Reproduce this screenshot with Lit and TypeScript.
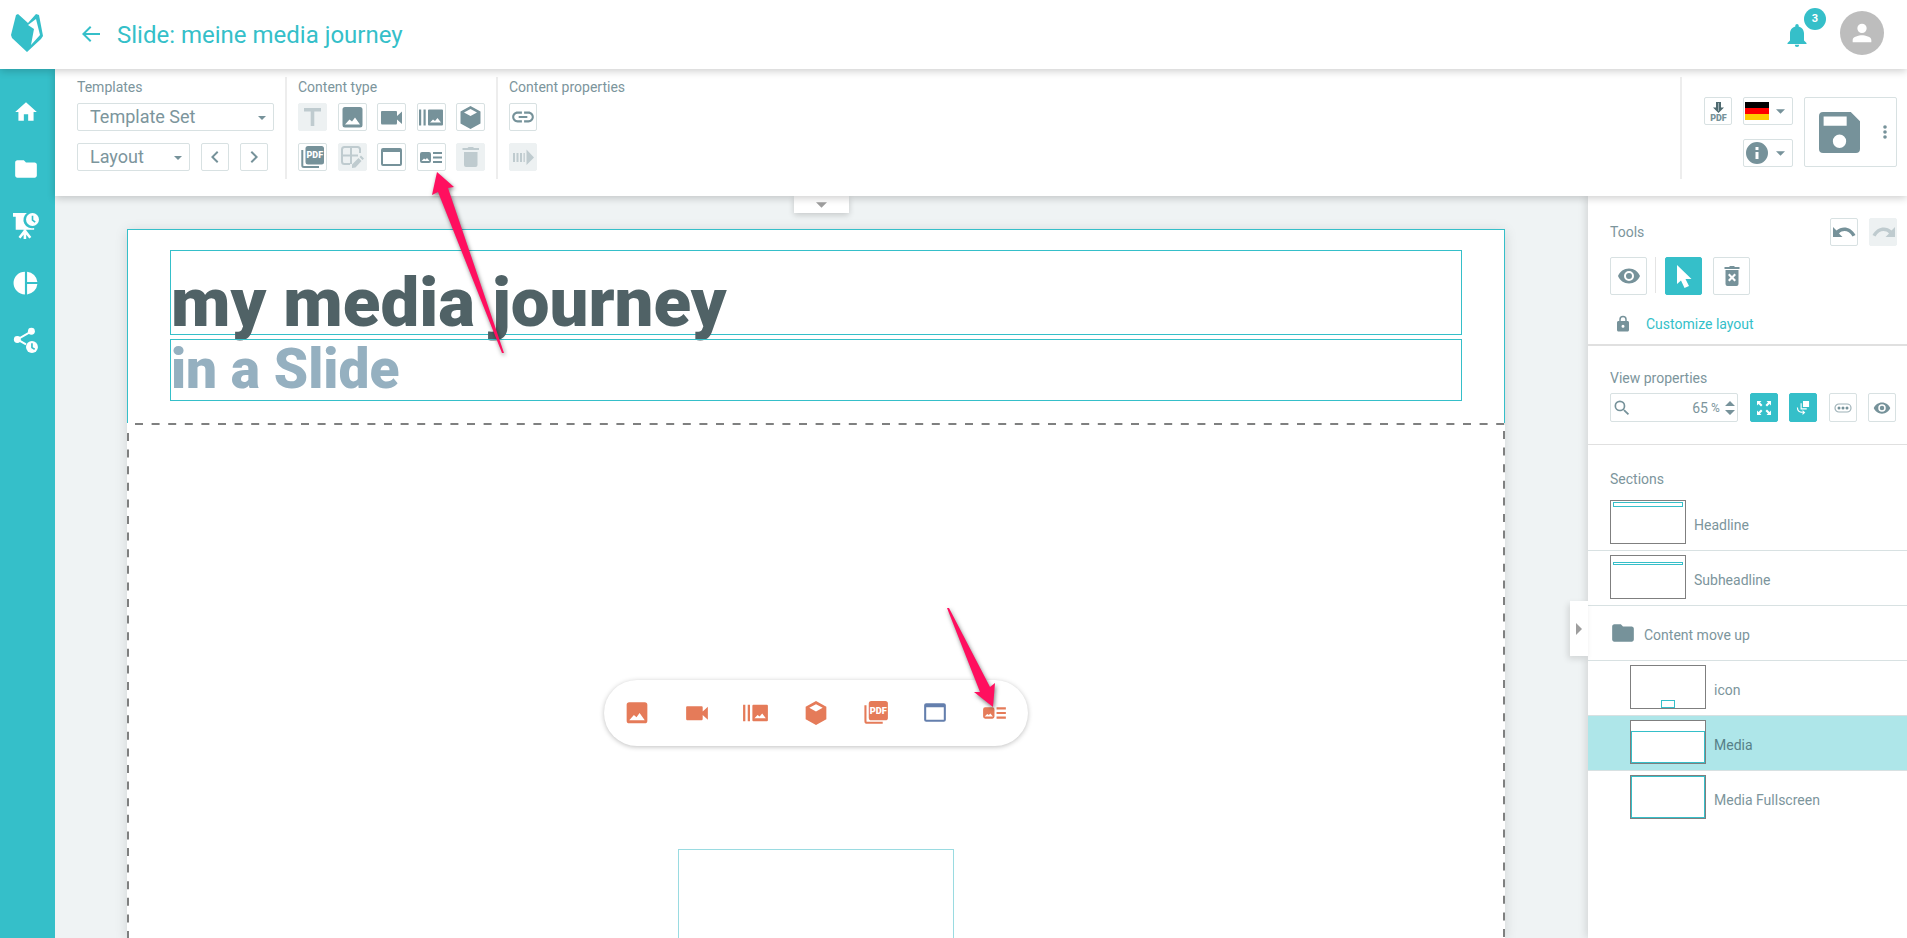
import { LitElement, html, css, svg, nothing } from "lit";
import { customElement, property } from "lit/decorators.js";

// Each glyph: [viewBox, drawing]. The 29-unit ones fill a toolbar button edge to edge.
const GLYPHS: Record<string, [string, unknown]> = {
  logo: ["0 0 32 38", svg`<path d="M7 0L17 9L25 0L28 1L32 22L30 25L16 38L1 24L0 21L5 1Z"/><path fill="#fff" d="M25 5L29 21L20 31L23 15L17 11Z"/>`],
  back: ["0 0 24 24", svg`<path d="M21 11H6.83l5.59-5.59L11 4l-8 8 8 8 1.41-1.41L6.83 13H21z"/>`],
  home: ["0 0 24 24", svg`<path d="M10 20v-6h4v6h5v-8h3L12 3 2 12h3v8z"/>`],
  folder: ["0 0 24 24", svg`<path d="M10 4H4c-1.1 0-2 .9-2 2v12c0 1.1.9 2 2 2h16c1.1 0 2-.9 2-2V8c0-1.1-.9-2-2-2h-8z"/>`],
  present: ["0 0 24 24", svg`<path d="M0 0H12.800A7.800 7.800 0 0 0 19.500 13.800V15.500H2.500V3.500H0z"/><path d="M11 15V24M11 16.500L6 22.800M11 16.500L16 22.800" fill="none" stroke="currentColor" stroke-width="2.400"/><circle cx="18" cy="6" r="6"/><path d="M18 2.500V6.500L20.500 8.500" fill="none" stroke="#35bfc9" stroke-width="1.500"/>`],
  pie: ["0 0 24 24", svg`<path d="M11 1.500V22.500A10.500 10.500 0 0 1 11 1.500zM13 1.500A10.500 10.500 0 0 1 22.500 11H13zM13 13H22.500A10.500 10.500 0 0 1 13 22.500z"/>`],
  share: ["0 0 24 24", svg`<path d="M17 4L4 11.500L12 16" fill="none" stroke="#fff" stroke-width="1.800"/><circle cx="17" cy="4" r="3.200"/><circle cx="4" cy="11.500" r="3.200"/><circle cx="17.500" cy="18.500" r="5.500"/><path d="M17.500 15V19L20 20.500" fill="none" stroke="#35bfc9" stroke-width="1.500"/>`],
  bell: ["0 0 24 24", svg`<path d="M12 24a2.200 2.200 0 0 0 2.200-2.200H9.800A2.200 2.200 0 0 0 12 24zM19 17.500V10.500C19 7 17 4.200 13.700 3.400V2.600a1.700 1.700 0 0 0-3.400 0V3.400C7 4.200 5 7 5 10.500V17.500L2.500 20V21H21.500V20z"/>`],
  person: ["0 0 24 24", svg`<path d="M12 12a4 4 0 1 0 0-8 4 4 0 0 0 0 8zm0 2c-2.700 0-8 1.300-8 4v2h16v-2c0-2.700-5.300-4-8-4z"/>`],
  prev: ["0 0 24 24", svg`<path d="M15.400 7.400L14 6l-6 6 6 6 1.400-1.400L10.800 12z"/>`],
  next: ["0 0 24 24", svg`<path d="M10 6L8.600 7.400 13.200 12l-4.600 4.600L10 18l6-6z"/>`],
  text: ["0 0 29 29", svg`<path d="M6 5H23V8.500H16.300V23H12.700V8.500H6z"/>`],
  image: ["0 0 29 29", svg`<path fill-rule="evenodd" d="M7 4H22A2.500 2.500 0 0 1 24.500 6.500V22A2.500 2.500 0 0 1 22 24.500H7A2.500 2.500 0 0 1 4.500 22V6.500A2.500 2.500 0 0 1 7 4zM7 21.500H22L17 14.500L14 18.500L11.500 16.500z"/>`],
  video: ["0 0 29 29", svg`<path d="M5 8H19Q20 8 20 9V13L25 8.500V21L20 16.500V20Q20 21.500 19 21.500H5Q4 21.500 4 20V9Q4 8 5 8z"/>`],
  slides: ["0 0 29 29", svg`<path fill-rule="evenodd" d="M2 6.500H4.200V22.500H2zM6.500 6.500H8.700V22.500H6.500zM12 6.500H25Q26 6.500 26 7.500V21.500Q26 22.500 25 22.500H12Q11 22.500 11 21.500V7.500Q11 6.500 12 6.500zM13 19.500H24L20.500 15L18 18L16 16.500z"/>`],
  cube: ["0 0 29 29", svg`<path fill-rule="evenodd" d="M14.500 3L24.500 8.500V20.500L14.500 26L4.500 20.500V8.500zM14.500 6L8 9.500L14.500 13L21 9.500z"/>`],
  pdf: ["0 0 29 29", svg`<path d="M4.300 7V22.500Q4.300 24 6 24H21" fill="none" stroke="currentColor" stroke-width="2"/><rect x="7.500" y="3" width="18.500" height="18.500" rx="2.500"/><text x="16.800" y="15" text-anchor="middle" fill="#fff" font-size="9" font-weight="900" font-family="Roboto, sans-serif">PDF</text>`],
  table: ["0 0 29 29", svg`<path d="M12 21H6.500Q4 21 4 18.500V6.500Q4 4 6.500 4H19.500Q22 4 22 6.500V10M4 12.500H20M13 4V21" fill="none" stroke="currentColor" stroke-width="2"/><path d="M14 25V21.500L20.500 15L23.500 18L17.500 24.500zM21.500 14L23 12.500L26 15.500L24.500 17z"/>`],
  window: ["0 0 29 29", svg`<path fill-rule="evenodd" d="M6 5H23Q25 5 25 7V21Q25 23 23 23H6Q4 23 4 21V7Q4 5 6 5zM6 9V21H23V9z"/>`],
  mediatext: ["0 0 29 29", svg`<path fill-rule="evenodd" d="M5 9H12Q14 9 14 11V18Q14 20 12 20H5Q3 20 3 18V11Q3 9 5 9zM4.500 18H12.500L10 15L8.500 16.500L7 15.500z"/><path d="M16 9H25V11H16zM16 13.500H25V15.500H16zM16 18H25V20H16z"/>`],
  trash: ["0 0 29 29", svg`<path d="M8 9H21.500V22Q21.500 24 19.500 24H10Q8 24 8 22zM6.500 5H11.500L12.500 4H17L18 5H23V7H6.500z"/>`],
  link: ["0 0 24 24", svg`<path d="M3.900 12c0-1.710 1.390-3.100 3.100-3.100h4V7H7c-2.760 0-5 2.240-5 5s2.240 5 5 5h4v-1.900H7c-1.710 0-3.100-1.390-3.100-3.100zM8 13h8v-2H8v2zm9-6h-4v1.900h4c1.710 0 3.100 1.390 3.100 3.100s-1.390 3.100-3.100 3.100h-4V17h4c2.760 0 5-2.240 5-5s-2.240-5-5-5z"/>`],
  move: ["0 0 29 29", svg`<path d="M4 10H6V19H4zM7.500 10H9.500V19H7.500zM11 10H13V19H11zM14.500 10H15.800V19H14.500zM17.500 6.500L25 14.500L17.500 22z"/>`],
  pdfdown: ["0 0 29 29", svg`<path fill="#4f6a70" d="M12 5H17V10.500H20L14.500 16L9 10.500H12z"/><path d="M14.500 6V14" stroke="#9db0b5" fill="none"/><text x="14.500" y="24" text-anchor="middle" font-size="9" font-weight="900" font-family="Roboto, sans-serif">PDF</text>`],
  flag: ["0 0 24 18", svg`<path fill="#000" d="M0 0H24V6H0z"/><path fill="#f00" d="M0 6H24V12H0z"/><path fill="#fc0" d="M0 12H24V18H0z"/>`],
  info: ["0 0 24 24", svg`<path fill-rule="evenodd" d="M12 1a11 11 0 1 0 0 22 11 11 0 0 0 0-22zM13.500 18h-3v-7h3zm0-9h-3V6h3z"/>`],
  caret: ["0 0 10 5", svg`<path d="M0 0H10L5 5z"/>`],
  save: ["0 0 40 40", svg`<path fill-rule="evenodd" d="M4 0H31L40 9V36Q40 40 36 40H4Q0 40 0 36V4Q0 0 4 0zM4.500 4.500V13.500H27V4.500zM20 22a6.500 6.500 0 1 0 0 13 6.500 6.500 0 0 0 0-13z"/>`],
  dots: ["0 0 4 14", svg`<circle cx="2" cy="2" r="1.800"/><circle cx="2" cy="7" r="1.800"/><circle cx="2" cy="12" r="1.800"/>`],
  undo: ["0 0 29 29", svg`<path d="M3 9L6.500 12.500C12 7.500 21 8.500 25.500 17L22.500 18.500C19 12.500 13 11.500 9 15.500L12.500 19H3z"/>`],
  redo: ["0 0 29 29", svg`<path d="M26 9L22.500 12.500C17 7.500 8 8.500 3.500 17L6.500 18.500C10 12.500 16 11.500 20 15.500L16.500 19H26z"/>`],
  eye: ["0 0 24 24", svg`<path d="M12 4.500C7 4.500 2.730 7.610 1 12c1.730 4.390 6 7.500 11 7.500s9.270-3.110 11-7.500c-1.730-4.390-6-7.500-11-7.500zM12 17a5 5 0 1 1 0-10 5 5 0 0 1 0 10zm0-8a3 3 0 1 0 0 6 3 3 0 0 0 0-6z"/>`],
  pointer: ["0 0 24 24", svg`<path d="M5 1V20L9 16.500L12.500 24L17 22L13.500 15H19.500z"/>`],
  trashx: ["0 0 24 24", svg`<path fill-rule="evenodd" d="M5.500 6H18.500V20Q18.500 22 16.500 22H7.500Q5.500 22 5.500 20zM4.500 3H9L10 2H14L15 3H19.500V5H4.500zM8 11L10.500 13.500L8 16L9.500 17.500L12 15L14.500 17.500L16 16L13.500 13.500L16 11L14.500 9.500L12 12L9.500 9.500z"/>`],
  lock: ["0 0 24 24", svg`<path fill-rule="evenodd" d="M18 8h-1V6A5 5 0 0 0 7 6v2H6c-1.100 0-2 .9-2 2v10c0 1.100.9 2 2 2h12c1.100 0 2-.9 2-2V10c0-1.100-.9-2-2-2zM12 17a2 2 0 1 1 0-4 2 2 0 0 1 0 4zM15 8H9V6a3 3 0 0 1 6 0z"/>`],
  search: ["0 0 24 24", svg`<path d="M15.500 14h-.79l-.28-.27A6.470 6.470 0 0 0 16 9.500 6.500 6.500 0 1 0 9.500 16c1.610 0 3.090-.59 4.230-1.570l.27.28v.79l5 4.990L20.490 19zm-6 0a4.500 4.500 0 1 1 0-9 4.500 4.500 0 0 1 0 9z"/>`],
  stepper: ["0 0 10 14", svg`<path d="M5 0L10 5H0zM0 9H10L5 14z"/>`],
  expand: ["0 0 14 14", svg`<path d="M0 0H4.500L3 1.500L5.500 4L4 5.500L1.500 3L0 4.500zM14 0V4.500L12.500 3L10 5.500L8.500 4L11 1.500L9.500 0zM0 14V9.500L1.500 11L4 8.500L5.500 10L3 12.500L4.500 14zM14 14H9.500L11 12.500L8.500 10L10 8.500L12.500 11L14 9.500z"/>`],
  rotate: ["0 0 14 15", svg`<path d="M7 0H13.500V6.500H7z"/><path d="M5 2.500V8.500H11M1 7Q1 12 6.500 12.200" fill="none" stroke="currentColor" stroke-width="1.200"/><path d="M6.500 9.600L9.500 12.300L6.500 15z"/>`],
  more: ["0 0 18 10", svg`<rect x="1" y="1" width="16" height="8" rx="4" fill="none" stroke="currentColor" stroke-width="1.200" opacity=".7"/><circle cx="5" cy="5" r="1.500"/><circle cx="9" cy="5" r="1.500"/><circle cx="13" cy="5" r="1.500"/>`],
  right: ["0 0 6 12", svg`<path d="M0 0L6 6L0 12z"/>`],
};

const ICON = (name: string) => html`<ui-icon name=${name}></ui-icon>`;

@customElement("ui-icon")
class UiIcon extends LitElement {
  @property() name = "";
  static styles = css`
    :host { display: block; flex: none; width: 24px; height: 24px; }
    svg { display: block; width: 100%; height: 100%; fill: currentColor; }
  `;
  render() {
    const g = GLYPHS[this.name];
    return g ? html`<svg viewBox=${g[0]} aria-hidden="true">${g[1]}</svg>` : nothing;
  }
}

const CONTENT_TYPES = [
  ["text", "Text", true], ["image", "Image", false], ["video", "Video", false],
  ["slides", "Slideshow", false], ["cube", "3D object", false], ["pdf", "PDF", false],
  ["table", "Table", true], ["window", "Web page", false], ["mediatext", "Media and text", false],
  ["trash", "Delete", true],
] as const;

const SECTIONS = [
  { label: "Headline", kind: "headline" },
  { label: "Subheadline", kind: "subheadline" },
  { label: "Content move up", kind: "group" },
  { label: "icon", kind: "small", nested: true },
  { label: "Media", kind: "media", nested: true, selected: true },
  { label: "Media Fullscreen", kind: "full", nested: true },
];

@customElement("app-root")
class AppRoot extends LitElement {
  static styles = css`
    :host {
      --teal: #35bfc9; --ink: #76929a; --line: #d8e1e2;
      display: flex; flex-direction: column; height: 100vh; overflow: hidden; position: relative;
      font: 14px/20px Roboto, sans-serif; color: #7c959c; background: #fff;
    }
    * { box-sizing: border-box; }
    button, select, input { font: inherit; color: inherit; margin: 0; padding: 0; background: #fff; }
    button { color: var(--ink); }
    h1, h2, p, ul { margin: 0; padding: 0; font-weight: 400; }
    ul { list-style: none; }

    header { display: flex; align-items: center; height: 69px; flex: none; z-index: 3; padding-right: 23px; background: #fff; box-shadow: 0 2px 8px rgba(0,0,0,.2); color: var(--teal); }
    .logo { width: 55px; padding-left: 11px; margin-bottom: 3px; }
    .logo ui-icon { width: 32px; height: 38px; }
    .plain { border: 0; background: none; display: grid; place-items: center; color: inherit; position: relative; }
    .back { margin: 0 14px 2px 24px; }
    header h1 { font-size: 24px; line-height: 32px; flex: 1; }
    .badge { position: absolute; left: 19px; top: -15px; width: 22px; height: 22px; border-radius: 11px; background: var(--teal); color: #fff; font-size: 11px; line-height: 22px; font-weight: 700; }
    .avatar { width: 44px; height: 44px; border-radius: 22px; background: #bdbdbd; color: #fff; margin: 0 0 3px 31px; }
    .avatar ui-icon { width: 28px; height: 28px; }

    .body { display: flex; flex: 1; min-height: 0; }
    .rail { width: 55px; flex: none; background: var(--teal); color: #fff; display: flex; flex-direction: column; align-items: center; gap: 31px; padding: 30px 4px 0 0; }
    .rail a { color: inherit; display: block; }
    .rail ui-icon { width: 26px; height: 26px; }
    .main { flex: 1; min-width: 0; display: flex; flex-direction: column; }

    .toolbar { display: flex; height: 127px; flex: none; padding: 8px 10px 17px 22px; z-index: 2; background: #fff; box-shadow: 0 2px 8px rgba(0,0,0,.2); }
    .group { padding: 0 11px; border-right: 2px solid #ededed; }
    .group:first-child { padding-left: 0; }
    .group.last { border: 0; flex: 1; }
    .group h2, .label { font-size: 14px; line-height: 16px; padding-top: 2px; }
    .group h2 { margin-bottom: 8px; }
    .row { display: flex; gap: 11px; }
    .row + .row { margin-top: 12px; }
    .btn { width: 28px; height: 28px; flex: none; border: 1px solid var(--line); border-radius: 2px; display: grid; place-items: center; place-content: center; overflow: hidden; }
    .btn ui-icon { width: 29px; height: 29px; }
    .btn ui-icon[name="link"] { width: 26px; height: 26px; }
    .btn ui-icon[name="prev"], .btn ui-icon[name="next"] { width: 24px; height: 24px; }
    .btn:disabled { background: #edf1f2; border-color: #edf1f2; color: #bfcbcf; }
    .btn.on { background: var(--teal); border-color: var(--teal); color: #fff; }
    .types { display: grid; grid-template-columns: repeat(5, 29px); justify-content: space-between; row-gap: 12px; width: 187px; }
    .types .btn { width: 29px; }
    .pick { position: relative; display: block; }
    .pick select { appearance: none; display: block; width: 100%; height: 28px; padding-left: 12px; border: 1px solid var(--line); border-radius: 2px; font-size: 18px; }
    .pick > ui-icon { position: absolute; right: 8px; top: 13px; width: 8px; height: 4px; color: var(--ink); }
    .set { width: 197px; }
    .lay { width: 113px; }
    .stack { display: grid; align-content: start; gap: 14px; padding-top: 20px; }
    .export { display: flex; gap: 11px; padding-left: 22px; border-left: 2px solid #ededed; }
    .drop { width: 50px; height: 28px; display: flex; align-items: center; gap: 7px; padding-left: 1px; border: 1px solid var(--line); border-radius: 2px; }
    .drop ui-icon[name="flag"] { height: 18px; }
    .drop ui-icon[name="caret"] { width: 9px; height: 5px; }
    .save { display: flex; align-items: center; justify-content: space-between; width: 93px; height: 70px; margin-top: 20px; padding: 0 9px 0 14px; border: 1px solid var(--line); border-radius: 2px; }
    .save ui-icon { width: 41px; height: 41px; }
    .save ui-icon[name="dots"] { width: 4px; height: 14px; }

    .work { display: flex; flex: 1; min-height: 0; position: relative; }
    .stage { flex: 1; min-width: 0; background: #eff3f4; padding: 33px 83px 0 72px; display: flex; }
    .slide { flex: 1; min-width: 0; display: flex; flex-direction: column; background: #fff; box-shadow: 0 2px 12px rgba(0,0,0,.13); }
    .titles { border: 1px solid var(--teal); border-bottom: 0; padding: 20px 42px 21px; height: 194px; display: grid; row-gap: 4px; align-content: start; }
    .titles p { border: 1px solid var(--teal); font-weight: 900; white-space: nowrap; }
    .titles .big { height: 85px; font-size: 69px; line-height: 104px; color: #506266; }
    .titles .sub { height: 62px; font-size: 55px; line-height: 58px; color: #95b0c0; }
    .media { flex: 1; position: relative; display: flex; flex-direction: column; align-items: center; padding-top: 257px; min-height: 0; }
    .dashes { position: absolute; inset: 0; width: 100%; height: 100%; }
    .dashes line { stroke: #7f8080; stroke-width: 2; stroke-dasharray: 8 8.600; }
    .pill { display: flex; justify-content: space-between; align-items: center; width: 424px; height: 66px; flex: none; border-radius: 33px; padding: 0 18px; background: #fff; box-shadow: 0 1px 5px rgba(0,0,0,.25); z-index: 1; color: #e57b59; }
    .pill ui-icon { width: 30px; height: 30px; }
    .pill ui-icon[name="window"] { color: #647fad; }
    .frame { width: 276px; flex: 1; margin-top: 103px; border: 1px solid #9adbe1; border-bottom: 0; }
    .tab { position: absolute; left: 739px; top: 0; width: 55px; height: 17px; background: #fff; color: #9e9e9e; border: 0; box-shadow: 0 2px 6px rgba(0,0,0,.18); display: grid; place-items: center; }
    .tab ui-icon { width: 11px; height: 6px; }

    aside { width: 319px; flex: none; position: relative; background: #fff; box-shadow: -2px 0 8px rgba(0,0,0,.12); }
    .handle { position: absolute; left: -18px; top: 405px; width: 18px; height: 55px; border: 0; background: #fff; color: #9e9e9e; display: grid; place-items: center; box-shadow: -2px 3px 6px rgba(0,0,0,.12); }
    .handle ui-icon { width: 6px; height: 12px; }
    .tools { padding: 22px 10px 0 22px; height: 150px; border-bottom: 2px solid #e0e0e0; }
    .toolhead { display: flex; gap: 11px; }
    .toolhead .label { flex: 1; padding-top: 6px; }
    .modes { display: flex; gap: 11px; margin-top: 11px; }
    .modes .btn { width: 37px; height: 38px; }
    .modes ui-icon { width: 24px; height: 24px; }
    .sep { width: 1px; margin: 0 -2px 2px -3px; background: #e4e4e4; }
    .custom { display: flex; align-items: center; gap: 14px; margin: 19px 0 0 4px; color: var(--teal); }
    .custom ui-icon { width: 18px; height: 18px; color: var(--ink); }
    .custom a { color: inherit; text-decoration: none; }
    .view { padding: 22px 11px 0 22px; height: 99px; border-bottom: 1px solid #e0e0e0; }
    .view .label { margin-bottom: 7px; display: block; }
    .zoomrow { display: flex; justify-content: space-between; }
    .zoom { display: flex; align-items: center; width: 128px; height: 29px; border: 1px solid var(--line); border-radius: 2px; padding: 0 4px 0 1px; }
    .zoom ui-icon { width: 20px; height: 20px; color: var(--ink); }
    .zoom input { appearance: textfield; border: 0; width: 76px; text-align: right; outline: 0; }
    .zoom input::-webkit-inner-spin-button { display: none; }
    .zoom span { font-size: 12px; padding: 0 5px 0 3px; }
    .zoom ui-icon[name="stepper"] { width: 10px; height: 14px; }
    .zoomrow .btn { height: 29px; }
    .zoomrow .btn ui-icon { width: 14px; height: 14px; }
    .zoomrow .btn ui-icon[name="more"] { width: 18px; }
    .zoomrow .btn ui-icon[name="eye"] { width: 18px; height: 18px; }
    .sections > .label { padding: 26px 0 9px 22px; }
    .sections li { display: flex; align-items: center; gap: 8px; height: 55px; padding: 0 22px; border-bottom: 1px solid var(--line); }
    .sections li:last-child { border-color: transparent; }
    .sections li.nested { padding-left: 42px; }
    .sections li.selected { background: #aee6e9; color: #568088; }
    .sections li > ui-icon { width: 26px; height: 26px; color: var(--ink); }
    .sections li > span { padding-top: 3px; }
    .thumb { position: relative; width: 76px; height: 44px; margin-bottom: 2px; border: 1px solid #7f7f7f; background: #fff; }
    .thumb i { position: absolute; border: 1px solid var(--teal); }
    .headline i { left: 2px; right: 2px; top: 1px; height: 5px; }
    .subheadline i { left: 2px; right: 2px; top: 6px; height: 3px; }
    .small i { left: 30px; width: 14px; bottom: 0; height: 8px; }
    .media-t i { inset: 10px 0 0; }
    .full i { inset: 0; }

    .arrows { position: absolute; left: 0; top: 0; width: 1040px; height: 720px; z-index: 5; pointer-events: none; fill: #ff0f5f; filter: drop-shadow(1px 2px 2px rgba(0,0,0,.5)); }
  `;

  private button(icon: string, label: string, cls = "", disabled = false) {
    return html`<button class="btn ${cls}" aria-label=${label} ?disabled=${disabled}>${ICON(icon)}</button>`;
  }

  private section(s: (typeof SECTIONS)[number]) {
    const cls = `${s.nested ? "nested" : ""} ${s.selected ? "selected" : ""}`;
    return html`<li class=${cls}>
      ${s.kind === "group" ? ICON("folder") : html`<div class="thumb ${s.kind === "media" ? "media-t" : s.kind}"><i></i></div>`}
      <span>${s.label}</span>
    </li>`;
  }

  render() {
    return html`
      <header>
        <div class="logo">${ICON("logo")}</div>
        <button class="plain back" aria-label="Back">${ICON("back")}</button>
        <h1>Slide: meine media journey</h1>
        <button class="plain bell" aria-label="Notifications">${ICON("bell")}<span class="badge">3</span></button>
        <button class="plain avatar" aria-label="Account">${ICON("person")}</button>
      </header>
      <div class="body">
        <nav class="rail">
          ${["home", "folder", "present", "pie", "share"].map((n) => html`<a href="#" aria-label=${n}>${ICON(n)}</a>`)}
        </nav>
        <div class="main">
          <div class="toolbar">
            <div class="group">
              <h2>Templates</h2>
              <div class="row">
                <label class="pick set"><select aria-label="Template Set"><option>Template Set</option></select>${ICON("caret")}</label>
              </div>
              <div class="row">
                <label class="pick lay"><select aria-label="Layout"><option>Layout</option></select>${ICON("caret")}</label>
                ${this.button("prev", "Previous layout")}${this.button("next", "Next layout")}
              </div>
            </div>
            <div class="group">
              <h2>Content type</h2>
              <div class="types">${CONTENT_TYPES.map(([i, l, d]) => this.button(i, l, "", d))}</div>
            </div>
            <div class="group last">
              <h2>Content properties</h2>
              <div class="row">${this.button("link", "Link")}</div>
              <div class="row">${this.button("move", "Animation", "", true)}</div>
            </div>
            <div class="export">
              <div class="stack">${this.button("pdfdown", "Download PDF")}</div>
              <div class="stack">
                <button class="drop" aria-label="Language">${ICON("flag")}${ICON("caret")}</button>
                <button class="drop" aria-label="Information">${ICON("info")}${ICON("caret")}</button>
              </div>
              <button class="save" aria-label="Save">${ICON("save")}${ICON("dots")}</button>
            </div>
          </div>
          <div class="work">
            <div class="stage">
              <div class="slide">
                <div class="titles"><p class="big">my media journey</p><p class="sub">in a Slide</p></div>
                <div class="media">
                  <svg class="dashes" aria-hidden="true">
                    <line x1="8" y1="1" x2="100%" y2="1"></line>
                    <line x1="1" y1="10" x2="1" y2="100%"></line>
                    <svg x="100%" overflow="visible"><line x1="-1" y1="8" x2="-1" y2="100%"></line></svg>
                  </svg>
                  <div class="pill">
                    ${["image", "video", "slides", "cube", "pdf", "window", "mediatext"].map((n) => html`<button class="plain" aria-label=${n}>${ICON(n)}</button>`)}
                  </div>
                  <div class="frame"></div>
                </div>
              </div>
            </div>
            <button class="tab" aria-label="Collapse toolbar">${ICON("caret")}</button>
            <aside>
              <button class="handle" aria-label="Collapse panel">${ICON("right")}</button>
              <div class="tools">
                <div class="toolhead"><h2 class="label">Tools</h2>${this.button("undo", "Undo")}${this.button("redo", "Redo", "", true)}</div>
                <div class="modes">
                  ${this.button("eye", "Preview")}<div class="sep"></div>${this.button("pointer", "Select", "on")}${this.button("trashx", "Clear")}
                </div>
                <div class="custom">${ICON("lock")}<a href="#">Customize layout</a></div>
              </div>
              <div class="view">
                <label class="label" for="zoom">View properties</label>
                <div class="zoomrow">
                  <div class="zoom">${ICON("search")}<input id="zoom" type="number" .value=${"65"} /><span>%</span>${ICON("stepper")}</div>
                  ${this.button("expand", "Fit", "on")}${this.button("rotate", "Snap", "on")}${this.button("more", "More")}${this.button("eye", "Show outlines")}
                </div>
              </div>
              <div class="sections">
                <h2 class="label">Sections</h2>
                <ul>${SECTIONS.map((s) => this.section(s))}</ul>
              </div>
            </aside>
          </div>
        </div>
      </div>
      <svg class="arrows" viewBox="0 0 1040 720" aria-hidden="true">
        <path d="M437 172L454 187L448 188L504 353L502 353L438 192L432 195z" />
        <path d="M993 707L974 692L980 692L947 608L949 608L990 687L995 683z" />
      </svg>
    `;
  }
}
